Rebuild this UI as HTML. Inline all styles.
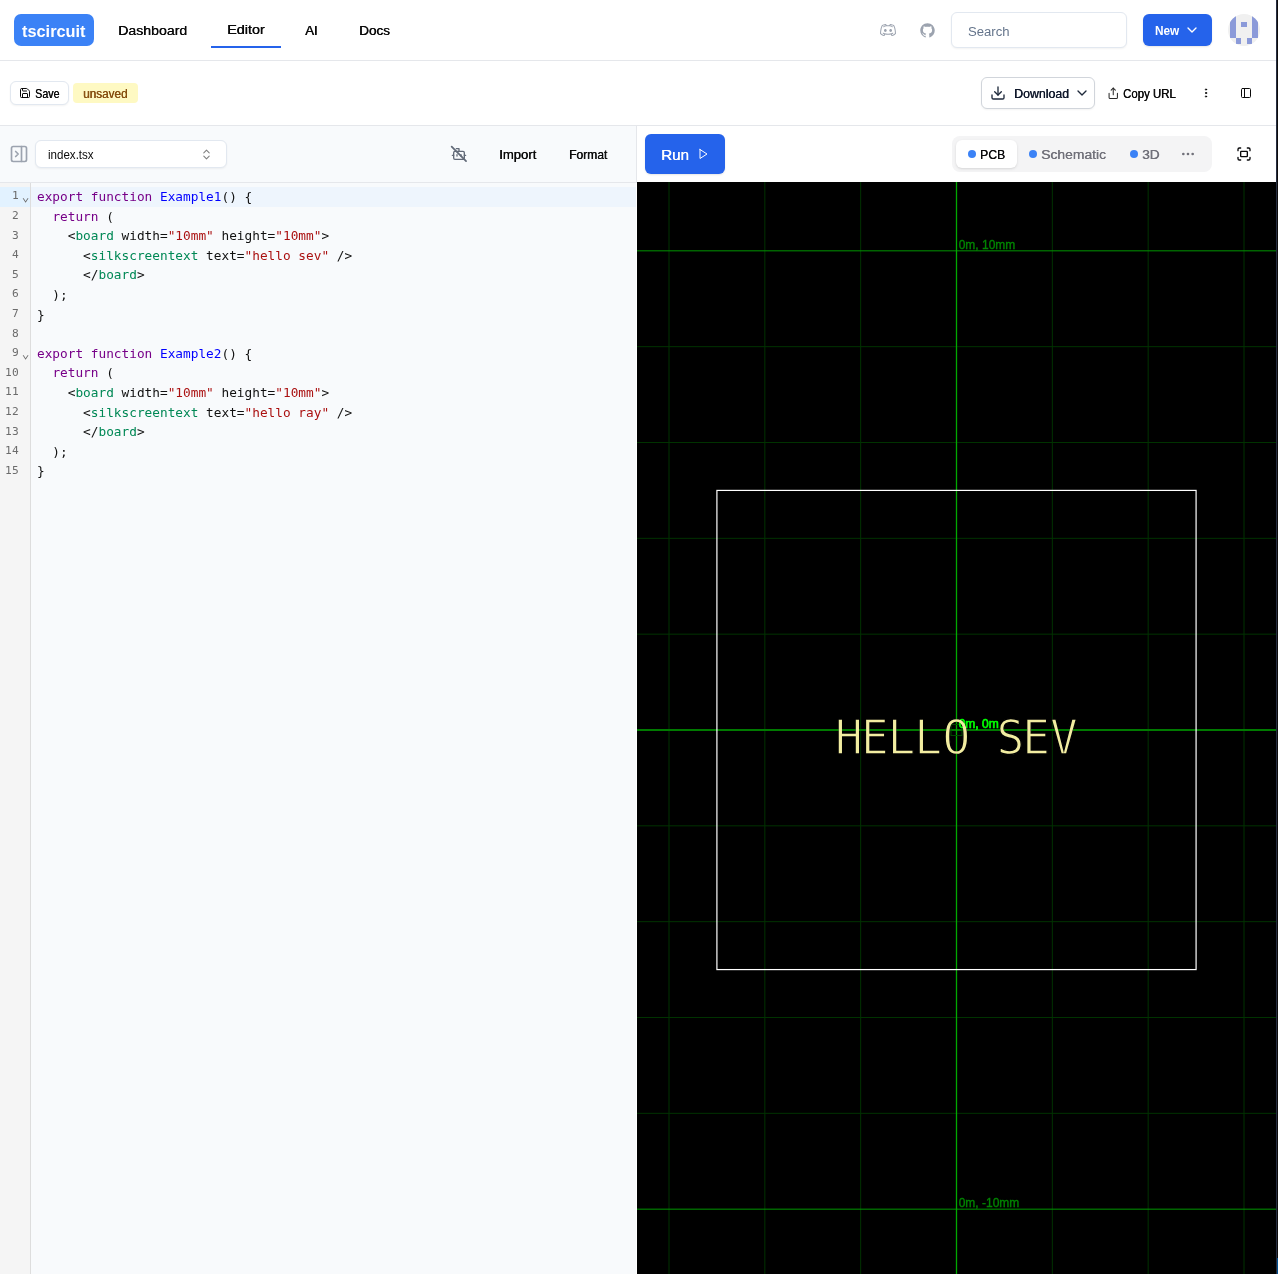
<!DOCTYPE html>
<html lang="en">
<head>
<meta charset="utf-8">
<title>tscircuit - Editor</title>
<style>
*{box-sizing:border-box;margin:0;padding:0}
html,body{width:1278px;height:1274px;overflow:hidden;background:#fff}
body{position:relative;font-family:"Liberation Sans",sans-serif;color:#0f172a;font-size:14px;line-height:20px}
.a{position:absolute}
.t{position:absolute;white-space:nowrap;line-height:20px;height:20px;transform-origin:0 50%}
.sb{text-shadow:0.4px 0 0 currentColor}
svg{position:absolute;overflow:visible}
.ic{fill:none;stroke:currentColor;stroke-width:2;stroke-linecap:round;stroke-linejoin:round}
/* header */
#hdr{left:0;top:0;width:1278px;height:61px;border-bottom:1px solid #e5e7eb;background:#fff}
#logo{left:14px;top:14px;width:80px;height:32px;background:#3b82f6;border-radius:7px}
#row2{left:0;top:61px;width:1278px;height:65px;border-bottom:1px solid #e5e7eb;background:#fff}
/* left */
#ltool{left:0;top:126px;width:636px;height:57px;background:#f8fafc;border-bottom:1px solid #e5e7eb}
#code{left:0;top:183px;width:636px;height:1091px;background:#f8fafc}
#gutter{left:0;top:183px;width:31px;height:1091px;background:#f5f5f5;border-right:1px solid #ddd}
#vdiv{left:636px;top:126px;width:1px;height:57px;background:#e5e7eb}
/* right */
#rtool{left:637px;top:126px;width:641px;height:56px;background:#fff}
#pcb{left:637px;top:182px;width:641px;height:1092px;background:#000}

.cm{font-family:"DejaVu Sans Mono","Liberation Mono",monospace;font-size:12.785px;line-height:19.6px}
.cm>div{height:19.6px;white-space:pre}
#nums{left:0;top:186.4px;width:19.2px;text-align:right;color:#6c6c6c;font-size:11.2px;letter-spacing:0.4px}
#folds{left:21.5px;top:187px;width:8px;text-align:center;color:#6c6c6c}
#src{left:37px;top:187px;color:#111}
.k{color:#708}.d{color:#00f}.g{color:#085}.s{color:#a11}
</style>
</head>
<body>
<div class="a" id="hdr"></div>
<div class="a" id="row2"></div>
<div class="a" id="ltool"></div>
<div class="a" id="code"></div>
<div class="a" id="gutter"></div>
<div class="a" id="vdiv"></div>
<div class="a" id="rtool"></div>
<div class="a" id="pcb"></div>
<div class="a" id="logo"></div>
<div class="t" id="t-logo" style="left:22px;top:21px;font-size:16.4px;color:#fff;font-weight:bold;transform:scaleX(0.996)">tscircuit</div>
<div class="t sb" id="t-dash" style="left:118px;top:21px;font-size:13.7px;color:#0a0a0a;transform:scaleX(1.031)">Dashboard</div>
<div class="t sb" id="t-editor" style="left:227px;top:20px;font-size:13.7px;color:#0a0a0a;transform:scaleX(1.050)">Editor</div>
<div class="a" style="left:211px;top:46px;width:70px;height:2px;background:#2563eb"></div>
<div class="t sb" id="t-ai" style="left:305px;top:21px;font-size:13.7px;color:#0a0a0a;transform:scaleX(0.971)">AI</div>
<div class="t sb" id="t-docs" style="left:359px;top:21px;font-size:13.7px;color:#0a0a0a;transform:scaleX(0.988)">Docs</div>
<svg style="left:880px;top:22px;color:#9ca3af" width="16" height="16" viewBox="0 0 15 15"><path fill="currentColor" fill-rule="evenodd" clip-rule="evenodd" d="M5.07451 1.82584C5.03267 1.81926 4.99014 1.81825 4.94803 1.82284C4.10683 1.91446 2.82673 2.36828 2.07115 2.77808C2.02106 2.80525 1.97621 2.84112 1.93869 2.88402C1.62502 3.24266 1.34046 3.82836 1.11706 4.38186C0.887447 4.95076 0.697293 5.55032 0.588937 5.98354C0.236232 7.39369 0.042502 9.08728 0.0174948 10.6925C0.0162429 10.7729 0.0351883 10.8523 0.0725931 10.9234C0.373679 11.496 1.02015 12.027 1.66809 12.4152C2.32332 12.8078 3.08732 13.1182 3.70385 13.1778C3.85335 13.1922 4.00098 13.1358 4.10282 13.0255C4.2572 12.8581 4.5193 12.4676 4.71745 12.1643C4.80739 12.0267 4.89157 11.8953 4.95845 11.7901C5.62023 11.9106 6.45043 11.9801 7.50002 11.9801C8.54844 11.9801 9.37796 11.9107 10.0394 11.7905C10.1062 11.8957 10.1903 12.0269 10.2801 12.1643C10.4783 12.4676 10.7404 12.8581 10.8947 13.0255C10.9966 13.1358 11.1442 13.1922 11.2937 13.1778C11.9102 13.1182 12.6742 12.8078 13.3295 12.4152C13.9774 12.027 14.6239 11.496 14.925 10.9234C14.9624 10.8523 14.9813 10.7729 14.9801 10.6925C14.9551 9.08728 14.7613 7.39369 14.4086 5.98354C14.3003 5.55032 14.1101 4.95076 13.8805 4.38186C13.6571 3.82836 13.3725 3.24266 13.0589 2.88402C13.0214 2.84112 12.9765 2.80525 12.9264 2.77808C12.1708 2.36828 10.8907 1.91446 10.0495 1.82284C10.0074 1.81825 9.96489 1.81926 9.92305 1.82584C9.71676 1.85825 9.5391 1.96458 9.40809 2.06355C9.26977 2.16804 9.1413 2.29668 9.0304 2.42682C8.86968 2.61544 8.71437 2.84488 8.61428 3.06225C8.27237 3.03501 7.90138 3.02 7.5 3.02C7.0977 3.02 6.72593 3.03508 6.38337 3.06244C6.28328 2.84501 6.12792 2.61549 5.96716 2.42682C5.85626 2.29668 5.72778 2.16804 5.58947 2.06355C5.45846 1.96458 5.2808 1.85825 5.07451 1.82584ZM11.0181 11.5382C11.0395 11.5713 11.0615 11.6051 11.0838 11.6392C11.2169 11.843 11.3487 12.0385 11.4508 12.1809C11.8475 12.0916 12.352 11.8818 12.8361 11.5917C13.3795 11.2661 13.8098 10.8918 14.0177 10.5739C13.9852 9.06758 13.7993 7.50369 13.4773 6.21648C13.38 5.82759 13.2038 5.27021 12.9903 4.74117C12.7893 4.24326 12.5753 3.82162 12.388 3.5792C11.7376 3.24219 10.7129 2.88582 10.0454 2.78987C10.0308 2.79839 10.0113 2.81102 9.98675 2.82955C9.91863 2.881 9.84018 2.95666 9.76111 3.04945C9.71959 3.09817 9.68166 3.1471 9.64768 3.19449C9.953 3.25031 10.2253 3.3171 10.4662 3.39123C11.1499 3.6016 11.6428 3.89039 11.884 4.212C12.0431 4.42408 12.0001 4.72494 11.788 4.884C11.5759 5.04306 11.2751 5.00008 11.116 4.788C11.0572 4.70961 10.8001 4.4984 10.1838 4.30877C9.58933 4.12585 8.71356 3.98 7.5 3.98C6.28644 3.98 5.41067 4.12585 4.81616 4.30877C4.19988 4.4984 3.94279 4.70961 3.884 4.788C3.72494 5.00008 3.42408 5.04306 3.212 4.884C2.99992 4.72494 2.95694 4.42408 3.116 4.212C3.35721 3.89039 3.85011 3.6016 4.53383 3.39123C4.77418 3.31727 5.04571 3.25062 5.35016 3.19488C5.31611 3.14738 5.27808 3.09831 5.23645 3.04945C5.15738 2.95666 5.07893 2.881 5.01081 2.82955C4.98628 2.81102 4.96674 2.79839 4.95217 2.78987C4.28464 2.88582 3.25999 3.24219 2.60954 3.5792C2.42226 3.82162 2.20825 4.24326 2.00729 4.74117C1.79376 5.27021 1.61752 5.82759 1.52025 6.21648C1.19829 7.50369 1.01236 9.06758 0.979855 10.5739C1.18776 10.8918 1.61803 11.2661 2.16146 11.5917C2.64561 11.8818 3.15008 12.0916 3.54679 12.1809C3.64883 12.0385 3.78068 11.843 3.91377 11.6392C3.93606 11.6051 3.95803 11.5713 3.97949 11.5382C3.34532 11.3474 2.94235 11.0997 2.66091 10.8181C2.47346 10.6305 2.47359 10.3265 2.66121 10.139C2.84883 9.95156 3.15283 9.95169 3.34029 10.1393C3.66348 10.4628 4.60743 11.0201 7.50002 11.0201C10.3926 11.0201 11.3366 10.4628 11.6597 10.1393C11.8472 9.95169 12.1512 9.95156 12.3388 10.139C12.5264 10.3265 12.5266 10.6305 12.3391 10.8181C12.0575 11.1 11.6538 11.3475 11.0181 11.5382ZM4.08049 7.01221C4.32412 6.74984 4.65476 6.60162 5.00007 6.59998C5.34538 6.60162 5.67603 6.74984 5.91966 7.01221C6.16329 7.27459 6.30007 7.62974 6.30007 7.99998C6.30007 8.37021 6.16329 8.72536 5.91966 8.98774C5.67603 9.25011 5.34538 9.39833 5.00007 9.39998C4.65476 9.39833 4.32412 9.25011 4.08049 8.98774C3.83685 8.72536 3.70007 8.37021 3.70007 7.99998C3.70007 7.62974 3.83685 7.27459 4.08049 7.01221ZM9.99885 6.59998C9.65354 6.60162 9.3229 6.74984 9.07926 7.01221C8.83563 7.27459 8.69885 7.62974 8.69885 7.99998C8.69885 8.37021 8.83563 8.72536 9.07926 8.98774C9.3229 9.25011 9.65354 9.39833 9.99885 9.39998C10.3442 9.39833 10.6748 9.25011 10.9184 8.98774C11.1621 8.72536 11.2989 8.37021 11.2989 7.99998C11.2989 7.62974 11.1621 7.27459 10.9184 7.01221C10.6748 6.74984 10.3442 6.60162 9.99885 6.59998Z"/></svg>
<svg style="left:920px;top:22.8px;color:#9ca3af" width="15" height="15" viewBox="0 0 15 15"><path fill="currentColor" fill-rule="evenodd" clip-rule="evenodd" d="M7.49933 0.25C3.49635 0.25 0.25 3.49593 0.25 7.50024C0.25 10.703 2.32715 13.4206 5.2081 14.3797C5.57084 14.446 5.70302 14.2222 5.70302 14.0299C5.70302 13.8576 5.69679 13.4019 5.69323 12.797C3.67661 13.235 3.25112 11.825 3.25112 11.825C2.92132 10.9874 2.44599 10.7644 2.44599 10.7644C1.78773 10.3149 2.49584 10.3238 2.49584 10.3238C3.22353 10.375 3.60629 11.0711 3.60629 11.0711C4.25298 12.1788 5.30335 11.8588 5.71638 11.6732C5.78225 11.205 5.96962 10.8854 6.17658 10.7043C4.56675 10.5209 2.87415 9.89918 2.87415 7.12104C2.87415 6.32925 3.15677 5.68257 3.62053 5.17563C3.54576 4.99226 3.29697 4.25521 3.69174 3.25691C3.69174 3.25691 4.30015 3.06196 5.68522 3.99973C6.26337 3.83906 6.8838 3.75895 7.50022 3.75583C8.1162 3.75895 8.73619 3.83906 9.31523 3.99973C10.6994 3.06196 11.3069 3.25691 11.3069 3.25691C11.7026 4.25521 11.4538 4.99226 11.3795 5.17563C11.8441 5.68257 12.1245 6.32925 12.1245 7.12104C12.1245 9.9063 10.4292 10.5192 8.81452 10.6985C9.07444 10.9224 9.30633 11.3648 9.30633 12.0413C9.30633 13.0102 9.29742 13.7922 9.29742 14.0299C9.29742 14.2239 9.42828 14.4496 9.79591 14.3788C12.6746 13.4179 14.75 10.7025 14.75 7.50024C14.75 3.49593 11.5036 0.25 7.49933 0.25Z"/></svg>
<div class="a" style="left:951px;top:12px;width:176px;height:36px;border:1px solid #e2e8f0;border-radius:6px;background:#fff;box-shadow:0 1px 2px rgba(0,0,0,.05)"></div>
<div class="t" id="t-search" style="left:968px;top:22px;font-size:13.7px;color:#64748b;transform:scaleX(0.959)">Search</div>
<div class="a" style="left:1143px;top:14px;width:69px;height:32px;background:#2563eb;border-radius:6px;box-shadow:0 1px 2px rgba(0,0,0,.1)"></div>
<div class="t" id="t-new" style="left:1155px;top:21px;font-size:12.4px;color:#fff;font-weight:bold;transform:scaleX(0.954)">New</div>
<svg class="ic" style="left:1184px;top:22px;color:#fff" width="16" height="16" viewBox="0 0 24 24" stroke-width="2"><path d="m6 9 6 6 6-6"/></svg>
<div class="a" style="left:1228.2px;top:14px;width:32px;height:32px;border-radius:50%;background:#f0f0f0;overflow:hidden">
<svg style="left:0;top:0" width="32" height="32" viewBox="0 0 32 32" shape-rendering="crispEdges"><g fill="#8b9ad9"><rect x="2.3" y="2.3" width="5.5" height="21.9"/><rect x="24.2" y="2.3" width="5.5" height="21.9"/><rect x="13.25" y="7.8" width="5.5" height="5.5"/><rect x="7.8" y="24.2" width="5.45" height="5.5"/><rect x="18.75" y="24.2" width="5.45" height="5.5"/></g></svg>
</div>
<div class="a" style="left:10px;top:81px;width:59px;height:24px;border:1px solid #e2e8f0;border-radius:6px;background:#fff;box-shadow:0 1px 2px rgba(0,0,0,.05)"></div>
<svg class="ic" style="left:19px;top:87px;color:#0a0a0a" width="12" height="12" viewBox="0 0 24 24" stroke-width="2"><path d="M15.2 3a2 2 0 0 1 1.4.6l3.8 3.8a2 2 0 0 1 .6 1.4V19a2 2 0 0 1-2 2H5a2 2 0 0 1-2-2V5a2 2 0 0 1 2-2z"/><path d="M17 21v-7a1 1 0 0 0-1-1H8a1 1 0 0 0-1 1v7"/><path d="M7 3v4a1 1 0 0 0 1 1h7"/></svg>
<div class="t sb" id="t-save" style="left:35px;top:84px;font-size:12.4px;color:#0a0a0a;transform:scaleX(0.863)">Save</div>
<div class="a" style="left:73px;top:83px;width:65px;height:20px;border-radius:4px;background:#fef9c3"></div>
<div class="t sb" id="t-unsaved" style="left:83px;top:84px;font-size:12.0px;color:#854d0e;transform:scaleX(0.979)">unsaved</div>
<div class="a" style="left:981px;top:77px;width:114px;height:32px;border:1px solid #d1d5db;border-radius:6px;background:#fff;box-shadow:0 1px 2px rgba(0,0,0,.05)"></div>
<svg class="ic" style="left:990px;top:85px;color:#1e293b" width="16" height="16" viewBox="0 0 24 24"><path d="M21 15v4a2 2 0 0 1-2 2H5a2 2 0 0 1-2-2v-4"/><polyline points="7 10 12 15 17 10"/><line x1="12" x2="12" y1="15" y2="3"/></svg>
<div class="t sb" id="t-download" style="left:1014px;top:84px;font-size:12.4px;color:#0f172a;transform:scaleX(0.996)">Download</div>
<svg class="ic" style="left:1074px;top:85px;color:#1e293b" width="16" height="16" viewBox="0 0 24 24"><path d="m6 9 6 6 6-6"/></svg>
<svg class="ic" style="left:1106.8px;top:86.8px;color:#2a2a2a" width="12.5" height="12.5" viewBox="0 0 24 24" stroke-width="2.5"><path d="M4 12v8a2 2 0 0 0 2 2h12a2 2 0 0 0 2-2v-8"/><polyline points="16 6 12 2 8 6"/><line x1="12" x2="12" y1="2" y2="15"/></svg>
<div class="t sb" id="t-copyurl" style="left:1123px;top:84px;font-size:12.4px;color:#0a0a0a;transform:scaleX(0.921)">Copy URL</div>
<svg class="ic" style="left:1200px;top:87px;color:#0a0a0a" width="12" height="12" viewBox="0 0 24 24"><circle cx="12" cy="12" r="1.3"/><circle cx="12" cy="5" r="1.3"/><circle cx="12" cy="19" r="1.3"/></svg>
<svg class="ic" style="left:1240px;top:87px;color:#0a0a0a" width="12" height="12" viewBox="0 0 24 24"><rect width="18" height="18" x="3" y="3" rx="2"/><path d="M9 3v18"/></svg>
<svg class="ic" style="left:9px;top:144px;color:#9ca3af" width="20" height="20" viewBox="0 0 24 24" stroke-width="2.2"><rect width="18" height="18" x="3" y="3" rx="2"/><path d="M15 3v18"/><path d="m8 9 3 3-3 3"/></svg>
<div class="a" style="left:35px;top:140px;width:192px;height:28px;border:1px solid #e2e8f0;border-radius:6px;background:#fff;box-shadow:0 1px 2px rgba(0,0,0,.05)"></div>
<div class="t" id="t-file" style="left:48px;top:145px;font-size:12.4px;color:#0a0a0a;transform:scaleX(0.933)">index.tsx</div>
<svg class="ic" style="left:199.5px;top:147.5px;color:#808080" width="13" height="13" viewBox="0 0 24 24" stroke-width="2.3"><path d="m7 15 5 5 5-5"/><path d="m7 9 5-5 5 5"/></svg>
<svg class="ic" style="left:451px;top:146px;color:#626a78" width="16" height="16" viewBox="0 0 24 24"><path d="M12 8V4H8"/><rect width="16" height="12" x="4" y="8" rx="2"/><path d="M2 14h2"/><path d="M20 14h2"/><path d="M15 13v2"/><path d="M9 13v2"/><path d="M1 1l21.6 21.6" stroke-width="2.6"/></svg>
<div class="t sb" id="t-import" style="left:499px;top:145px;font-size:12.4px;color:#0a0a0a;transform:scaleX(1.059)">Import</div>
<div class="t sb" id="t-format" style="left:569px;top:145px;font-size:12.4px;color:#0a0a0a;transform:scaleX(0.973)">Format</div>
<div class="a" style="left:0;top:187px;width:30px;height:19.6px;background:#e2f2ff"></div>
<div class="a" style="left:31px;top:187px;width:605px;height:19.6px;background:#eef5fd"></div>
<div class="a cm" id="nums">
<div class="ln">1</div>
<div class="ln">2</div>
<div class="ln">3</div>
<div class="ln">4</div>
<div class="ln">5</div>
<div class="ln">6</div>
<div class="ln">7</div>
<div class="ln">8</div>
<div class="ln">9</div>
<div class="ln">10</div>
<div class="ln">11</div>
<div class="ln">12</div>
<div class="ln">13</div>
<div class="ln">14</div>
<div class="ln">15</div>
</div>
<div class="a cm" id="folds">
<div class="fd">⌄</div>
<div class="fd"></div>
<div class="fd"></div>
<div class="fd"></div>
<div class="fd"></div>
<div class="fd"></div>
<div class="fd"></div>
<div class="fd"></div>
<div class="fd">⌄</div>
<div class="fd"></div>
<div class="fd"></div>
<div class="fd"></div>
<div class="fd"></div>
<div class="fd"></div>
<div class="fd"></div>
</div>
<div class="a cm" id="src">
<div class="cl"><span class="k">export</span> <span class="k">function</span> <span class="d">Example1</span>() {</div>
<div class="cl">  <span class="k">return</span> (</div>
<div class="cl">    &lt;<span class="g">board</span> width=<span class="s">"10mm"</span> height=<span class="s">"10mm"</span>&gt;</div>
<div class="cl">      &lt;<span class="g">silkscreentext</span> text=<span class="s">"hello sev"</span> /&gt;</div>
<div class="cl">      &lt;/<span class="g">board</span>&gt;</div>
<div class="cl">  );</div>
<div class="cl">}</div>
<div class="cl"></div>
<div class="cl"><span class="k">export</span> <span class="k">function</span> <span class="d">Example2</span>() {</div>
<div class="cl">  <span class="k">return</span> (</div>
<div class="cl">    &lt;<span class="g">board</span> width=<span class="s">"10mm"</span> height=<span class="s">"10mm"</span>&gt;</div>
<div class="cl">      &lt;<span class="g">silkscreentext</span> text=<span class="s">"hello ray"</span> /&gt;</div>
<div class="cl">      &lt;/<span class="g">board</span>&gt;</div>
<div class="cl">  );</div>
<div class="cl">}</div>
</div>
<div class="a" style="left:645px;top:134px;width:80px;height:40px;background:#2563eb;border-radius:6px;box-shadow:0 1px 2px rgba(0,0,0,.1)"></div>
<div class="t sb" id="t-run" style="left:661px;top:145px;font-size:15.2px;color:#fff">Run</div>
<svg class="ic" style="left:697px;top:148px;color:#fff" width="12" height="12" viewBox="0 0 24 24" stroke-width="2"><polygon points="6 3 20 12 6 21 6 3"/></svg>
<div class="a" style="left:952px;top:136px;width:260px;height:36px;background:#f4f4f5;border-radius:8px"></div>
<div class="a" style="left:956px;top:140px;width:61px;height:28px;background:#fff;border-radius:6px;box-shadow:0 1px 3px rgba(0,0,0,.1),0 1px 2px -1px rgba(0,0,0,.1)"></div>
<div class="a" style="left:968px;top:150px;width:8px;height:8px;border-radius:50%;background:#3b82f6"></div>
<div class="t sb" id="t-pcb" style="left:980px;top:145px;font-size:13.7px;color:#09090b;transform:scaleX(0.890)">PCB</div>
<div class="a" style="left:1029px;top:150px;width:8px;height:8px;border-radius:50%;background:#3b82f6"></div>
<div class="t sb" id="t-sch" style="left:1041px;top:145px;font-size:13.7px;color:#71717a;transform:scaleX(1.015)">Schematic</div>
<div class="a" style="left:1130px;top:150px;width:8px;height:8px;border-radius:50%;background:#3b82f6"></div>
<div class="t sb" id="t-3d" style="left:1142px;top:145px;font-size:13.7px;color:#71717a;transform:scaleX(0.997)">3D</div>
<svg class="ic" style="left:1180px;top:146px;color:#71717a" width="16" height="16" viewBox="0 0 24 24"><circle cx="12" cy="12" r="1"/><circle cx="19" cy="12" r="1"/><circle cx="5" cy="12" r="1"/></svg>
<svg class="ic" style="left:1236px;top:146px;color:#09090b" width="16" height="16" viewBox="0 0 24 24"><path d="M3 7V5a2 2 0 0 1 2-2h2"/><path d="M17 3h2a2 2 0 0 1 2 2v2"/><path d="M21 17v2a2 2 0 0 1-2 2h-2"/><path d="M7 21H5a2 2 0 0 1-2-2v-2"/><rect width="10" height="8" x="7" y="8" rx="1"/></svg>
<svg id="pcbsvg" style="left:637px;top:182px" width="639" height="1092" viewBox="637 182 639 1092">
<rect x="637" y="182" width="639" height="1092" fill="#000"/>
<path d="M669.00 182V1274M764.83 182V1274M860.67 182V1274M1052.33 182V1274M1148.17 182V1274M1244.00 182V1274M637 346.66H1276M637 442.50H1276M637 538.33H1276M637 634.17H1276M637 825.83H1276M637 921.67H1276M637 1017.50H1276M637 1113.34H1276" stroke="#003200" stroke-width="1" fill="none"/>
<path d="M637 250.83H1276M637 1209.17H1276" stroke="#009600" stroke-width="1" fill="none"/>
<path d="M637 730.00H1276" stroke="#007a00" stroke-width="2" fill="none"/>
<path d="M956.50 182V1274" stroke="#00a800" stroke-width="1.3" fill="none"/>
<rect x="951.0" y="724.5" width="11" height="11" fill="none" stroke="#004800" stroke-width="1"/>
<text x="958.7" y="248.83" fill="#008400" stroke="#008400" stroke-width="0.35" style="font-family:'Liberation Sans',sans-serif;font-size:12px">0m, 10mm</text>
<text x="958.7" y="1207.17" fill="#008400" stroke="#008400" stroke-width="0.35" style="font-family:'Liberation Sans',sans-serif;font-size:12px">0m, -10mm</text>
<text x="958.7" y="727.80" fill="#00ff00" stroke="#00ff00" stroke-width="0.7" style="font-family:'Liberation Sans',sans-serif;font-size:12px">0m, 0m</text>
<rect x="716.91" y="490.41" width="479.17" height="479.17" fill="none" stroke="#fff" stroke-width="1.2"/>
<text x="860.93 887.73 914.85 942.47 971.55 1000.26 1027.32 1053.92 1082.37" y="754.4" transform="scale(0.97,1)" fill="#f2eda1" stroke="#000" stroke-width="1.4" style="font-family:'DejaVu Sans Mono','Liberation Mono',monospace;font-size:47.6px;mix-blend-mode:lighten;paint-order:fill stroke">HELLO SEV</text>
</svg>
<div class="a" style="left:1276px;top:0;width:1px;height:1274px;background:#262d41"></div>
<div class="a" style="left:1277px;top:0;width:1px;height:1274px;background:#0e0d0c"></div>
<div class="a" style="left:1277px;top:1258px;width:1px;height:16px;background:#00508f"></div>
</body>
</html>
